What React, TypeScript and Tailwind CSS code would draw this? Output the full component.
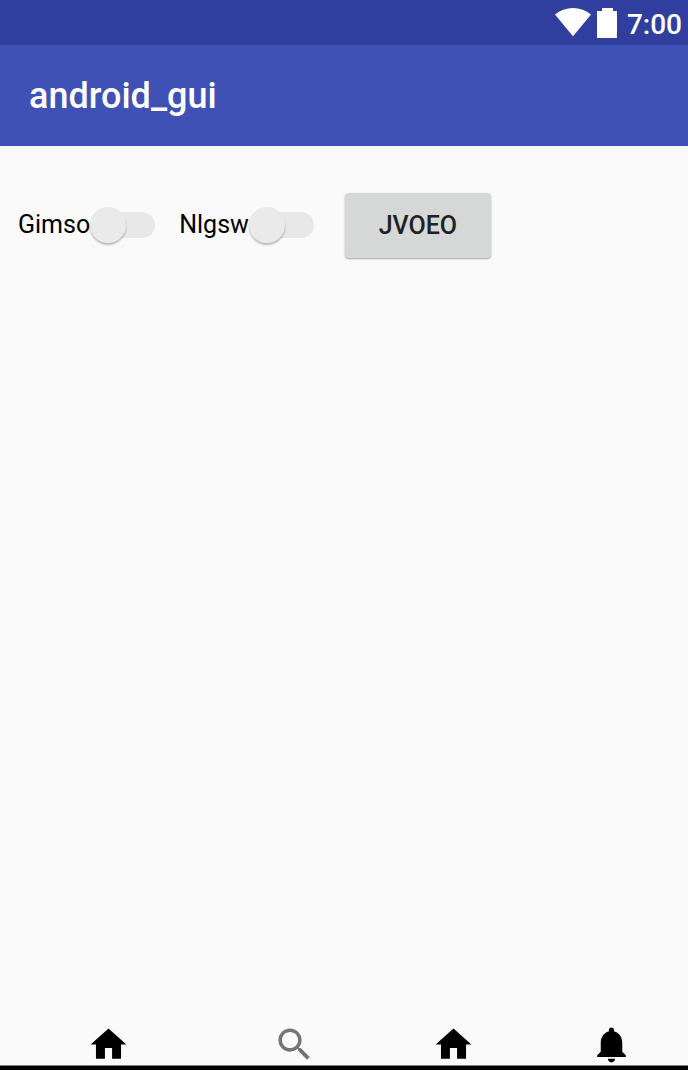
type ToggleProps = { id: string; label: string };

function Toggle({ id, label }: ToggleProps) {
  return (
    <label htmlFor={id} className="flex h-9 items-center text-[25px] leading-9 text-black">
      <span>{label}</span>
      <input
        id={id}
        type="checkbox"
        role="switch"
        className="grid h-9 w-[65px] cursor-pointer appearance-none items-center before:col-start-1 before:row-start-1 before:ml-3 before:h-[26px] before:rounded-full before:bg-[#e8e8e8] after:col-start-1 after:row-start-1 after:size-9 after:rounded-full after:bg-[#eaeaea] after:shadow-[0_2px_2px_rgba(0,0,0,0.25)] checked:after:justify-self-end"
      />
    </label>
  );
}

const HOME = "M10 20v-6h4v6h5v-8h3L12 3 2 12h3v8z";
const SEARCH =
  "M15.5 14h-.79l-.28-.27C15.41 12.59 16 11.11 16 9.5 16 5.91 13.09 3 9.5 3S3 5.91 3 9.5 5.91 16 9.5 16c1.61 0 3.09-.59 4.23-1.57l.27.28v.79l5 4.99L20.49 19l-4.99-5zm-6 0C7.01 14 5 11.99 5 9.5S7.01 5 9.5 5 14 7.01 14 9.5 11.99 14 9.5 14z";
const BELL =
  "M12 22c1.1 0 2-.9 2-2h-4c0 1.1.89 2 2 2zm6-6v-5c0-3.07-1.64-5.64-4.5-6.32V4c0-.83-.67-1.5-1.5-1.5s-1.5.67-1.5 1.5v.68C7.63 5.36 6 7.92 6 11v5l-2 2v1h16v-1l-2-2z";

const tabs = [
  { label: "Home", path: HOME, color: "text-black" },
  { label: "Search", path: SEARCH, color: "text-[#757575]" },
  { label: "Start", path: HOME, color: "text-black" },
  { label: "Notifications", path: BELL, color: "text-black" },
];

export default function App() {
  return (
    <div className="flex min-h-screen flex-col bg-[#fafafa] font-[Roboto,sans-serif]">
      <div className="flex h-[45px] items-start justify-end bg-[#303f9f] pr-[6px] pt-2 text-white">
        <svg viewBox="0 0 36 30" className="h-[30px] w-9" fill="currentColor" aria-hidden="true">
          <path d="M0 6.5C5 2.2 11.200 0 18 0s13 2.200 18 6.500L18 28.200z" />
        </svg>
        <svg viewBox="0 0 20 30" className="ml-[6px] h-[30px] w-5" fill="currentColor" aria-hidden="true">
          <path d="M5 0h11v3h4v27H0V3h5z" />
        </svg>
        <span className="ml-[10px] text-[28px] font-medium leading-[34px]">7:00</span>
      </div>

      <header className="flex h-[101px] items-center bg-[#3f51b5] px-[29px]">
        <h1 className="text-[36px] font-medium leading-[44px] text-white">android_gui</h1>
      </header>

      <main className="flex flex-1 items-start px-[18px] pt-[47px]">
        <div className="flex h-16 items-center gap-6">
          <Toggle id="gimso" label="Gimso" />
          <Toggle id="nlgsw" label="Nlgsw" />
        </div>
        <button
          type="button"
          className="ml-[31px] h-[65px] w-[146px] rounded-[4px] bg-[#d6d8d7] text-[25px] font-medium leading-8 text-[#212121] shadow-[0_1px_2px_rgba(0,0,0,0.35)]"
        >
          JVOEO
        </button>
      </main>

      <nav className="grid h-11 grid-cols-[216fr_157fr_161fr_154fr] border-b border-[#808080] pt-px">
        {tabs.map((tab) => (
          <button
            key={tab.label}
            type="button"
            aria-label={tab.label}
            className={`flex items-start justify-center ${tab.color}`}
          >
            <svg viewBox="0 0 24 24" className="size-[43px]" fill="currentColor" aria-hidden="true">
              <path d={tab.path} />
            </svg>
          </button>
        ))}
      </nav>
      <div className="h-1 bg-black" />
    </div>
  );
}
